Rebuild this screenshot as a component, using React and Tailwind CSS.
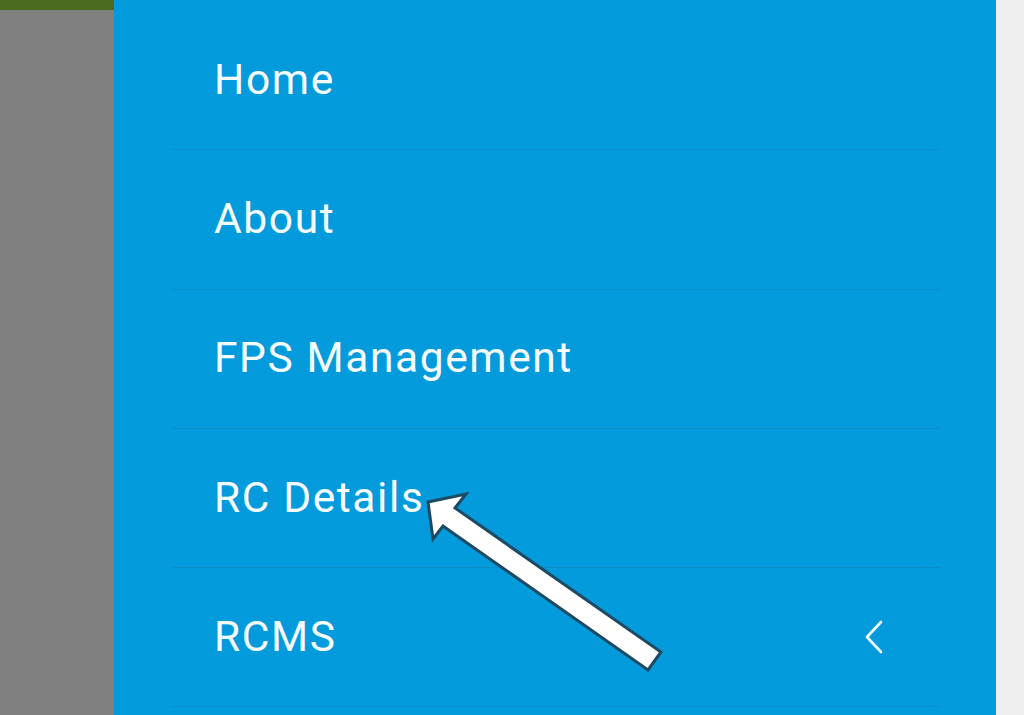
const items = [
  { label: "Home" },
  { label: "About" },
  { label: "FPS Management" },
  { label: "RC Details" },
  { label: "RCMS", submenu: true },
];

function Chevron() {
  return (
    <svg width="22" height="34" viewBox="0 0 22 34" fill="none">
      <polyline
        points="18,2 4,17 18,32"
        stroke="#f2fbff"
        strokeWidth="2.6"
        strokeLinecap="round"
        strokeLinejoin="round"
      />
    </svg>
  );
}

function Arrow() {
  return (
    <svg className="absolute left-0 top-0 pointer-events-none" width="1024" height="715">
      <polygon
        points="428,502 466,494 455,508 661,652 648,670 443,526 433,539"
        fill="#ffffff"
        stroke="#1d4a63"
        strokeWidth="3"
        strokeLinejoin="miter"
      />
    </svg>
  );
}

export default function App() {
  return (
    <div
      className="relative flex w-[1024px] h-[715px] overflow-hidden"
      style={{ fontFamily: "Roboto, 'Noto Sans', sans-serif" }}
    >
      <div className="w-[114px] bg-[#808080] flex flex-col">
        <div className="h-[10px] bg-[#4b6b22]" />
      </div>
      <div className="flex-1 bg-[#049bdc] pt-[11px]">
        {items.map((item) => (
          <div
            key={item.label}
            className="ml-[58px] mr-[56px] h-[139.3px] border-b border-[#0c8cc8] flex items-center"
          >
            <span className="pl-[42px] text-[42.5px] leading-none text-[#f4fcff] tracking-[1.6px]">
              {item.label}
            </span>
            {item.submenu && (
              <div className="ml-auto mr-[55px] flex items-center">
                <Chevron />
              </div>
            )}
          </div>
        ))}
      </div>
      <div className="w-[28px] bg-[#efefef]" />
      <Arrow />
    </div>
  );
}
